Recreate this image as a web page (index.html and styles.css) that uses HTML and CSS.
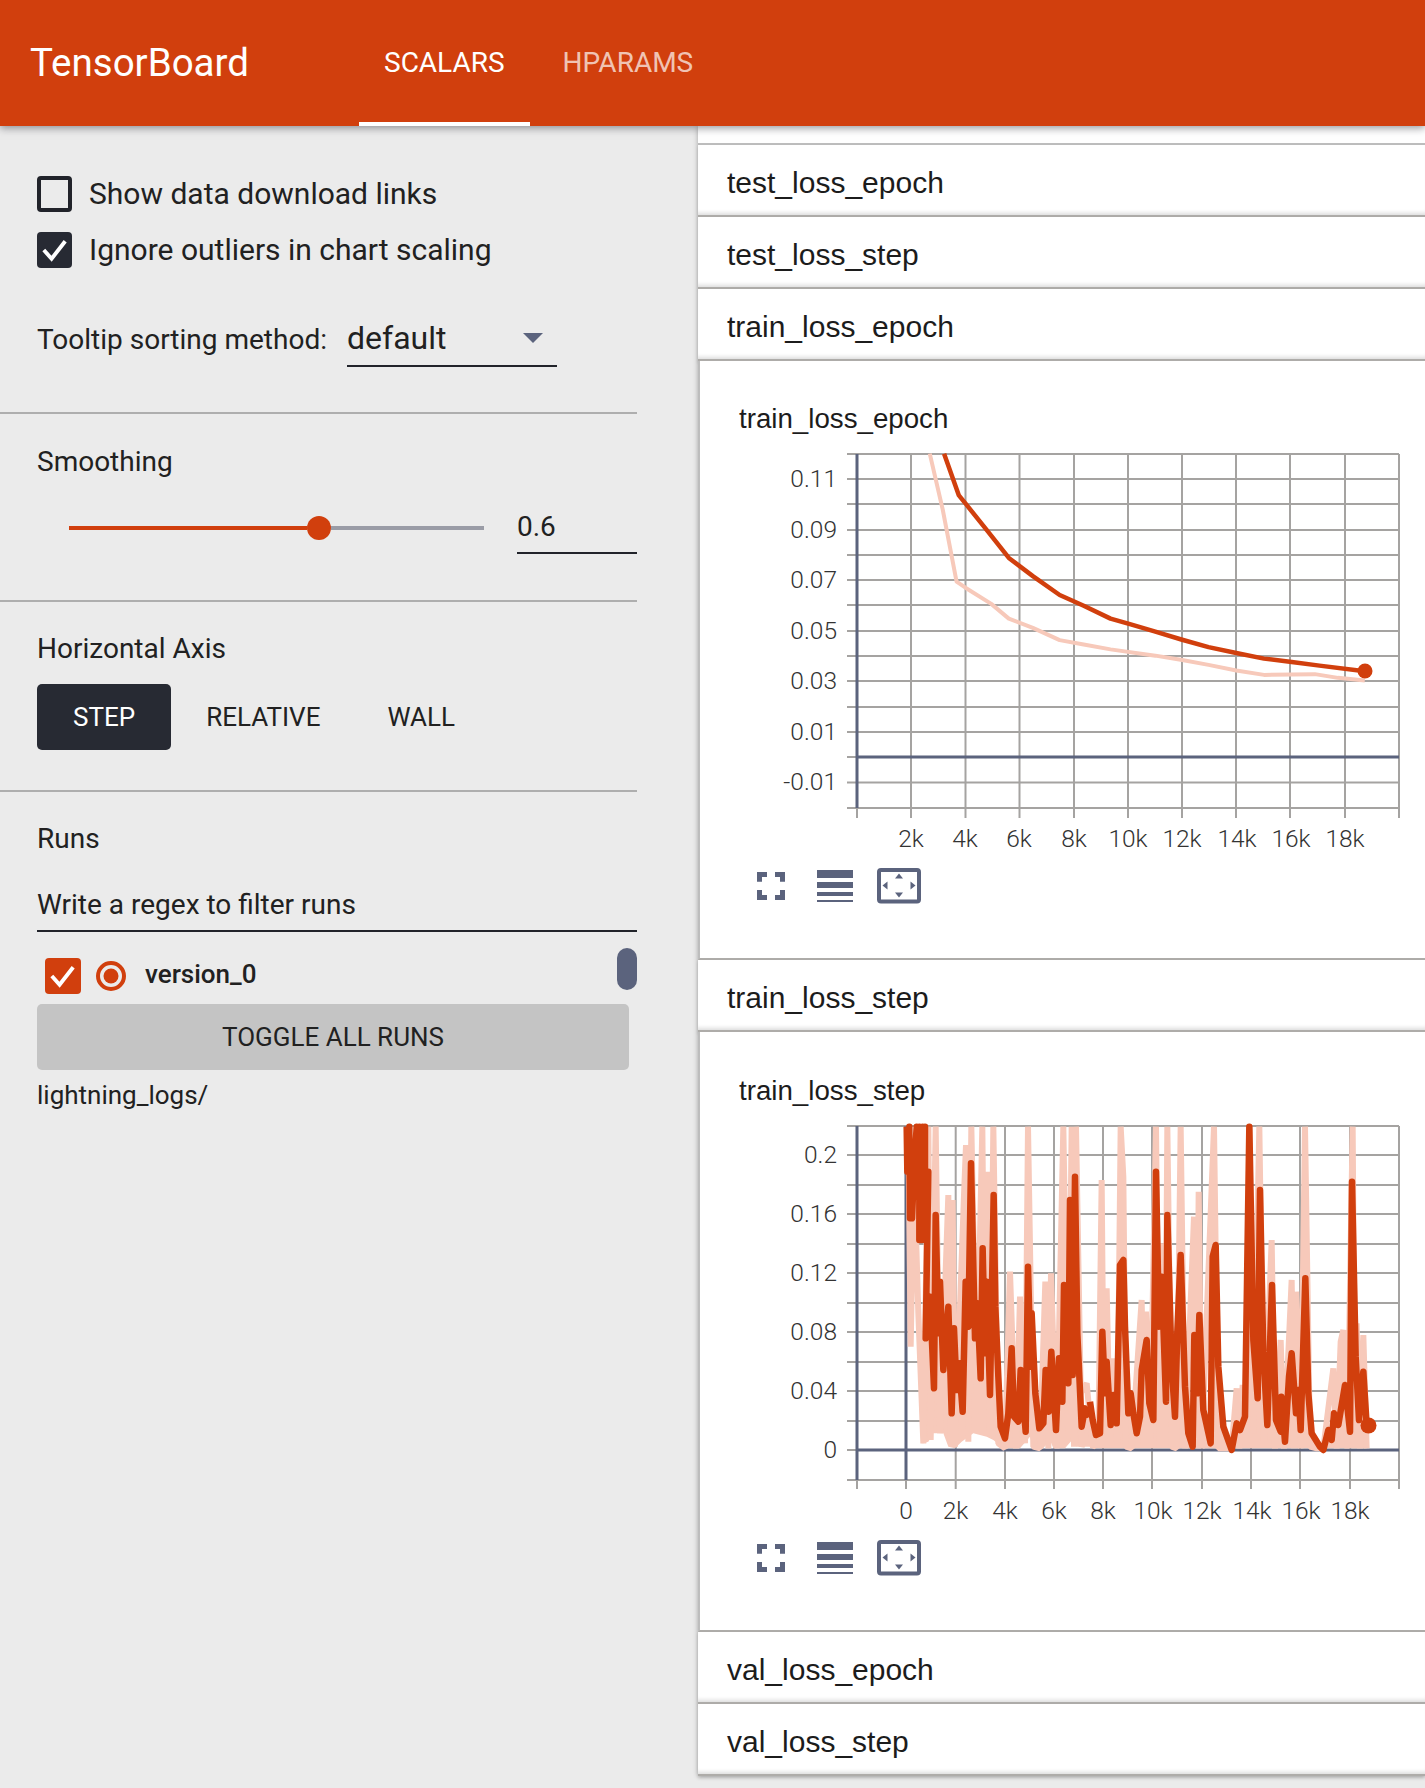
FILE: index.html
```html
<!DOCTYPE html>
<html lang="en">
<head>
<meta charset="utf-8">
<title>TensorBoard</title>
<link rel="stylesheet" href="styles.css">
</head>
<body>
<header class="topbar">
  <div class="brand">TensorBoard</div>
  <nav class="tabs">
    <a class="tab tab-active">SCALARS</a>
    <a class="tab tab-muted">HPARAMS</a>
  </nav>
</header>
<div class="layout">
  <aside class="sidebar">
    <section class="group group-options">
      <label class="check-row">
        <span class="box box-empty"></span>
        <span class="check-label">Show data download links</span>
      </label>
      <label class="check-row">
        <span class="box box-dark"><svg class="tick" viewBox="0 0 36 36"><path d="M7 18l8 9L29 9"/></svg></span>
        <span class="check-label">Ignore outliers in chart scaling</span>
      </label>
      <div class="tooltip-row">
        <span class="tooltip-label">Tooltip sorting method:</span>
        <div class="dropdown">
          <span>default</span>
          <svg class="caret" viewBox="0 0 20 10"><path d="M0 0h20L10 10z"/></svg>
        </div>
      </div>
    </section>
    <section class="group group-smoothing">
      <div class="group-title">Smoothing</div>
      <div class="smooth-row">
        <div class="slider">
          <span class="slider-fill"></span>
          <span class="slider-thumb"></span>
          <span class="slider-rest"></span>
        </div>
        <div class="smooth-value">0.6</div>
      </div>
    </section>
    <section class="group group-axis">
      <div class="group-title">Horizontal Axis</div>
      <div class="axis-buttons">
        <span class="axis-btn axis-btn-on">STEP</span>
        <span class="axis-btn axis-btn-relative">RELATIVE</span>
        <span class="axis-btn axis-btn-wall">WALL</span>
      </div>
    </section>
    <section class="group group-runs">
      <div class="group-title">Runs</div>
      <div class="filter">Write a regex to filter runs</div>
      <div class="run-list">
        <div class="run-row">
          <span class="box box-orange"><svg class="tick" viewBox="0 0 36 36"><path d="M7 18l8 9L29 9"/></svg></span>
          <svg class="radio" viewBox="0 0 30 30"><circle cx="15" cy="15" r="13" class="radio-ring"/><circle cx="15" cy="15" r="7.5" class="radio-dot"/></svg>
          <span class="run-name">version_0</span>
        </div>
        <span class="scroll-thumb"></span>
      </div>
      <div class="toggle-btn">TOGGLE ALL RUNS</div>
      <div class="run-dir">lightning_logs/</div>
    </section>
  </aside>
  <main class="content">
    <div class="stub"></div>
    <div class="pane-head">test_loss_epoch</div>
    <div class="pane-head">test_loss_step</div>
    <div class="pane-head">train_loss_epoch</div>
    <div class="chart-block">
      <div class="chart-title">train_loss_epoch</div>
      <svg class="plot" viewBox="698 440 727 420">
        <path class="grid" d="M847 454H1399M847 479H1399M847 504H1399M847 530H1399M847 555H1399M847 580H1399M847 605H1399M847 631H1399M847 656H1399M847 681H1399M847 707H1399M847 732H1399M847 757H857M847 782.500H1399M847 808H1399M911 454V818M965.500 454V818M1019.500 454V818M1074 454V818M1128 454V818M1182 454V818M1236 454V818M1290 454V818M1345 454V818M1399 454V818M857 808V818"/>
        <path class="axis" d="M857 454V808M857 757H1399"/>
        <g transform="translate(700 380) scale(.4623 .37)">
          <polyline class="raw raw-thin" points="497,199 525,350 555,545 575,562 630,605 668,645 720,670 778,703 830,715 888,728 985,745 1043,757 1100,770 1160,785 1220,797 1280,796 1330,795 1380,805 1438,812"/>
          <polyline class="smooth smooth-curve" points="528,199 560,312 575,335 620,405 668,481 720,530 778,581 830,610 888,645 930,660 985,680 1043,702 1100,722 1160,738 1220,753 1280,762 1340,772 1438,787"/>
        </g>
        <circle class="end-dot" cx="1365" cy="671" r="7.500"/>
        <g class="ylabels">
          <text x="837" y="487">0.11</text>
          <text x="837" y="538">0.09</text>
          <text x="837" y="588">0.07</text>
          <text x="837" y="639">0.05</text>
          <text x="837" y="689">0.03</text>
          <text x="837" y="740">0.01</text>
          <text x="837" y="790">-0.01</text>
        </g>
        <g class="xlabels">
          <text x="911" y="847">2k</text>
          <text x="965" y="847">4k</text>
          <text x="1019" y="847">6k</text>
          <text x="1074" y="847">8k</text>
          <text x="1128" y="847">10k</text>
          <text x="1182" y="847">12k</text>
          <text x="1237" y="847">14k</text>
          <text x="1291" y="847">16k</text>
          <text x="1345" y="847">18k</text>
        </g>
      </svg>
      <svg class="toolbar" viewBox="0 0 200 38">
        <path class="tool-stroke" d="M14.500 15.700V8.500H22M30 8.500H37.500V15.700M37.500 24V31.500H30M22 31.500H14.500V24"/>
        <path class="tool-fill" d="M72 4h36v8H72zM72 16h36v6H72zM72 26h36v4H72zM72 34h36v2H72z"/>
        <rect class="tool-box" x="134" y="4" width="40" height="31.500" rx="2"/>
        <path class="tool-fill" d="M154 7.500l4 5h-8zM154 31.500l-4-5h8zM137.500 19.500l5-4v8zM170.500 19.500l-5-4v8z"/>
      </svg>
    </div>
    <div class="pane-head">train_loss_step</div>
    <div class="chart-block chart-block-second">
      <div class="chart-title">train_loss_step</div>
      <svg class="plot" viewBox="698 1112 727 420">
        <path class="grid" d="M847 1126H1399M847 1155H1399M847 1185H1399M847 1214H1399M847 1244H1399M847 1273H1399M847 1303H1399M847 1332H1399M847 1362H1399M847 1391H1399M847 1421H1399M847 1450H857M847 1480H1399M955.700 1126V1489M1005 1126V1489M1054 1126V1489M1103 1126V1489M1152 1126V1489M1202 1126V1489M1251 1126V1489M1300 1126V1489M1350 1126V1489M1399 1126V1489M857 1480V1489M906 1480V1489"/>
        <path class="axis" d="M857 1126V1480M906 1126V1480M857 1450H1399"/>
        <g transform="translate(760 1100) scale(.33333)">
          <polygon class="raw-body" points="485,1030 497,715 510,590 522,865 527,345 535,700 540,545 550,810 565,620 575,940 582,685 590,870 597,790 608,935 617,545 625,680 633,190 645,715 652,610 662,835 668,445 675,760 680,545 690,885 701,285 706,620 715,830 722,980 735,1015 745,940 755,745 762,950 775,965 782,810 797,995 804,500 812,800 815,640 826,880 838,985 850,970 857,810 866,935 874,755 888,990 897,775 907,905 912,555 925,850 930,300 938,825 945,230 952,700 965,980 975,925 990,950 990,1040 950,1040 945,1010 915,1045 880,1045 870,1020 850,1045 820,1045 810,1010 780,1045 760,1045 730,1045 700,1020 680,1010 640,1000 605,1025 585,1045 565,1040 550,1000 520,1000 505,1025 490,1030"/>
          <polyline class="raw" points="445,80 452,740 462,200 475,640 490,1030 505,80 512,1020 527,80 540,1000 565,285 572,1030 578,300 585,1040 612,285 618,135 625,1025 634,80 650,880 667,80 675,900 682,215 690,1000 700,80 715,1030 735,1045 750,515 768,1045 780,590 795,1030 804,80 820,1040 840,1045 856,545 865,1045 873,520 890,1045 910,80 925,1000 935,80 942,1040 948,80 965,1040 980,1000"/>
        </g>
        <g transform="translate(1090 1100) scale(.33333)">
          <polygon class="raw-body" points="0,905 8,960 18,1005 30,1000 37,695 45,880 50,785 62,975 70,885 80,970 90,495 100,480 105,680 115,940 122,880 130,940 140,1000 150,950 155,810 170,720 178,910 190,960 198,215 207,680 215,530 228,905 232,345 245,800 255,950 262,695 272,465 285,860 295,1000 308,1040 313,705 322,880 328,645 340,930 362,1030 368,470 377,435 385,800 400,980 425,1050 440,970 450,990 465,950 478,80 490,720 503,895 510,270 520,760 532,975 546,555 558,960 572,995 574,890 585,1025 597,830 605,760 618,940 625,870 632,990 646,535 655,880 665,1000 690,1040 700,1050 715,990 725,1020 732,940 745,975 765,855 780,995 786,245 797,770 807,960 820,815 830,975 830,1045 0,1045"/>
          <polyline class="raw" points="-100,1000 -10,850 8,1040 25,1030 35,240 42,1040 50,565 60,1035 70,775 82,1040 92,80 100,230 108,1040 125,1045 155,600 162,1040 168,635 180,1035 198,80 208,1040 218,430 225,1040 232,80 245,1040 260,1045 272,80 285,1045 312,350 320,1045 326,275 335,1045 372,80 385,1045 425,1045 440,865 448,1045 458,855 470,1000 478,80 490,1000 508,80 522,1040 545,420 555,1045 572,720 582,1045 605,540 612,1045 618,575 632,1045 645,80 660,1040 680,1045 700,1045 730,805 740,1045 752,725 760,690 772,1045 788,80 795,1045 800,670 810,1045 820,705 830,1045"/>
        </g>
        <g transform="translate(760 1100) scale(.33333)">
          <polyline class="smooth" points="440,80 442,215 448,80 450,355 456,355 462,215 470,80 470,215 478,80 478,420 488,80 486,420 495,80 495,215 505,215 497,715 510,590 522,865 527,345 535,700 540,545 550,810 565,620 575,940 582,685 590,870 597,790 608,935 617,545 625,680 633,190 645,715 652,610 662,835 668,445 675,760 680,545 690,885 701,285 706,620 715,830 722,980 735,1015 745,940 755,745 762,950 775,965 782,810 797,995 804,500 812,800 815,640 826,880 838,985 850,970 857,810 866,935 874,755 888,990 897,775 907,905 912,555 925,850 930,300 938,825 945,230 952,700 965,980 975,925 990,950"/>
        </g>
        <g transform="translate(1090 1100) scale(.33333)">
          <polyline class="smooth" points="0,905 8,960 18,1005 30,1000 37,695 45,880 50,785 62,975 70,885 80,970 90,495 100,480 105,680 115,940 122,880 130,940 140,1000 150,950 155,810 170,720 178,910 190,960 198,215 207,680 215,530 228,905 232,345 245,800 255,950 262,695 272,465 285,860 295,1000 308,1040 313,705 322,880 328,645 340,930 362,1030 368,470 377,435 385,800 400,980 425,1050 440,970 450,990 465,950 478,80 490,720 503,895 510,270 520,760 532,975 546,555 558,960 572,995 574,890 585,1025 597,830 605,760 618,940 625,870 632,990 646,535 655,880 665,1000 690,1040 700,1050 715,990 725,1020 732,940 745,975 765,855 780,995 786,245 797,770 807,960 820,815 830,975"/>
        </g>
        <circle class="end-dot" cx="1368.500" cy="1425.500" r="8"/>
        <g class="ylabels">
          <text x="837" y="1163">0.2</text>
          <text x="837" y="1222">0.16</text>
          <text x="837" y="1281">0.12</text>
          <text x="837" y="1340">0.08</text>
          <text x="837" y="1399">0.04</text>
          <text x="837" y="1458">0</text>
        </g>
        <g class="xlabels">
          <text x="906" y="1519">0</text>
          <text x="955.500" y="1519">2k</text>
          <text x="1005" y="1519">4k</text>
          <text x="1054" y="1519">6k</text>
          <text x="1103" y="1519">8k</text>
          <text x="1153" y="1519">10k</text>
          <text x="1202" y="1519">12k</text>
          <text x="1252" y="1519">14k</text>
          <text x="1301" y="1519">16k</text>
          <text x="1350" y="1519">18k</text>
        </g>
      </svg>
      <svg class="toolbar" viewBox="0 0 200 38">
        <path class="tool-stroke" d="M14.500 15.700V8.500H22M30 8.500H37.500V15.700M37.500 24V31.500H30M22 31.500H14.500V24"/>
        <path class="tool-fill" d="M72 4h36v8H72zM72 16h36v6H72zM72 26h36v4H72zM72 34h36v2H72z"/>
        <rect class="tool-box" x="134" y="4" width="40" height="31.500" rx="2"/>
        <path class="tool-fill" d="M154 7.500l4 5h-8zM154 31.500l-4-5h8zM137.500 19.500l5-4v8zM170.500 19.500l-5-4v8z"/>
      </svg>
    </div>
    <div class="pane-head">val_loss_epoch</div>
    <div class="pane-head">val_loss_step</div>
  </main>
</div>
</body>
</html>
```

FILE: styles.css
```css
* { box-sizing: border-box; }

html, body {
  margin: 0;
  padding: 0;
}

body {
  width: 1425px;
  height: 1788px;
  overflow: hidden;
  background: #ebebeb;
  color: #212121;
  font-family: Roboto, "Liberation Sans", sans-serif;
  font-size: 28px;
}

/* Top bar */
.topbar {
  position: relative;
  z-index: 2;
  display: flex;
  height: 126px;
  padding-left: 30px;
  background: #d13f0d;
  color: #fff;
  box-shadow: 0 2px 8px rgba(60, 60, 70, .55);
}

.brand {
  width: 329px;
  font-size: 38.500px;
  line-height: 126px;
}

.tabs { display: flex; }

.tab {
  display: block;
  height: 126px;
  padding: 0 25px;
  font-size: 28px;
  line-height: 125px;
}

.tab-active { border-bottom: 4px solid #fff; }
.tab-muted { margin-left: 8px; color: rgba(255, 255, 255, .7); }

/* Layout */
.layout { display: flex; }

.sidebar {
  flex: 0 0 698px;
  width: 698px;
}

.group {
  width: 637px;
  padding-left: 37px;
  border-bottom: 2px solid #aeaeae;
}

.group-title { line-height: 38px; height: 36px; }

/* Options */
.group-options { padding-top: 50px; padding-bottom: 45px; }

.check-row {
  display: flex;
  align-items: center;
  gap: 17px;
  height: 36px;
  margin-bottom: 20px;
}

.check-label {
  margin-top: -2px;
  font-size: 30px;
}

.box {
  display: block;
  flex: 0 0 35px;
  width: 35px;
  height: 36px;
  border-radius: 4px;
}

.box-empty { border: 4px solid #21232a; }
.box-dark { background: #272a33; }
.box-orange { flex-basis: 36px; width: 36px; background: #d13f0d; }

.tick {
  display: block;
  width: 35px;
  height: 36px;
  fill: none;
  stroke: #fff;
  stroke-width: 4;
}

.tooltip-row {
  display: flex;
  align-items: flex-end;
  margin-top: 36px;
  height: 63px;
}

.tooltip-label {
  width: 310px;
  line-height: 54px;
  white-space: nowrap;
}

.dropdown {
  display: flex;
  justify-content: space-between;
  align-items: center;
  width: 210px;
  height: 63px;
  padding-top: 6px;
  padding-right: 14px;
  border-bottom: 2px solid #21232a;
  font-size: 32px;
  line-height: 50px;
}

.caret {
  width: 20px;
  height: 10px;
  fill: #5b637d;
}

/* Smoothing */
.group-smoothing { padding-top: 29px; padding-bottom: 46px; }

.smooth-row {
  display: flex;
  align-items: flex-start;
  margin-top: 25px;
  padding-left: 32px;
}

.slider {
  display: flex;
  align-items: center;
  width: 415px;
  height: 48px;
}

.slider-fill { flex: 0 0 238px; height: 4px; background: #d13f0d; }
.slider-thumb { flex: 0 0 24px; height: 24px; border-radius: 50%; background: #d13f0d; }
.slider-rest { flex: 1; height: 4px; background: #9a9ca6; }

.smooth-value {
  width: 120px;
  height: 50px;
  margin-left: 33px;
  border-bottom: 2px solid #21232a;
  line-height: 46px;
}

/* Horizontal axis */
.group-axis { padding-top: 28px; padding-bottom: 40px; }

.axis-buttons {
  display: flex;
  margin-top: 18px;
}

.axis-btn {
  height: 66px;
  padding: 0 36px;
  border-radius: 5px;
  font-size: 26px;
  line-height: 66px;
}

.axis-btn-relative { margin-left: -1px; }
.axis-btn-wall { margin-left: -5px; }

.axis-btn-on {
  background: #272a33;
  color: #fff;
}

/* Runs */
.group-runs { padding-top: 28px; border-bottom: 0; }

.filter {
  height: 46px;
  margin-top: 30px;
  border-bottom: 2px solid #21232a;
  line-height: 38px;
}

.run-list {
  position: relative;
  margin-top: 26px;
}

.run-row {
  display: flex;
  align-items: center;
  height: 36px;
  padding-left: 8px;
}

.radio {
  flex: 0 0 30px;
  width: 30px;
  height: 30px;
  margin-left: 15px;
}

.radio-ring { fill: none; stroke: #d13f0d; stroke-width: 4; }
.radio-dot { fill: #d13f0d; }

.run-name {
  margin-left: 19px;
  padding-bottom: 5px;
  font-size: 26px;
  font-weight: 500;
}

.scroll-thumb {
  position: absolute;
  top: -10px;
  right: 0;
  width: 20px;
  height: 42px;
  border-radius: 10px;
  background: #5b637d;
}

.toggle-btn {
  width: 592px;
  height: 66px;
  margin-top: 10px;
  border-radius: 5px;
  background: #c4c4c4;
  font-size: 26px;
  line-height: 66px;
  text-align: center;
}

.run-dir {
  margin-top: 7px;
  font-size: 26px;
  line-height: 36px;
}

/* Main */
.content {
  position: relative;
  flex: 1;
  min-width: 0;
  box-shadow: 0 0 5px rgba(0, 0, 0, .3);
}

.stub {
  height: 19px;
  background: #fff;
  border-bottom: 2px solid #bdbdbd;
}

.pane-head {
  height: 72px;
  padding-left: 29px;
  background: #fff;
  border-bottom: 2px solid #aeaca9;
  box-shadow: inset 0 -5px 4px -3px rgba(0, 0, 0, .14), 0 2px 3px rgba(0, 0, 0, .12);
  font-family: "Liberation Sans", Arial, sans-serif;
  font-size: 30px;
  line-height: 75px;
  color: #1c1c1c;
}

.chart-block {
  height: 599px;
  padding-top: 40px;
  background: #fff;
  border-left: 2px solid #bdbdbd;
  border-bottom: 2px solid #aeaca9;
}

.chart-block-second {
  height: 600px;
  padding-top: 41px;
}

.chart-title {
  height: 39px;
  padding-left: 39px;
  font-family: "Liberation Sans", Arial, sans-serif;
  font-size: 27.700px;
  line-height: 36px;
  color: #1c1c1c;
}

.plot {
  display: block;
  width: 727px;
  height: 420px;
  margin-left: -2px;
}

.grid { fill: none; stroke: #a5a3a1; stroke-width: 2; }
.axis { fill: none; stroke: #5b637d; stroke-width: 3; }

.raw {
  fill: none;
  stroke: #f7c9ba;
  stroke-width: 6;
  stroke-linejoin: bevel;
  vector-effect: non-scaling-stroke;
}

.raw-body { fill: #f7c9ba; }

.raw-thin { stroke-width: 4; stroke-linejoin: round; }

.smooth {
  fill: none;
  stroke: #d13f0d;
  stroke-width: 6.500;
  stroke-linejoin: round;
  vector-effect: non-scaling-stroke;
}

.smooth-curve { stroke-width: 4.500; }

.end-dot { fill: #d13f0d; }

.ylabels text,
.xlabels text {
  font-family: Roboto, "Liberation Sans", sans-serif;
  font-weight: 300;
  font-size: 24.500px;
  fill: #333;
}

.ylabels text { text-anchor: end; }
.xlabels text { text-anchor: middle; }

.toolbar {
  display: block;
  width: 200px;
  height: 38px;
  margin-top: 6px;
  margin-left: 45px;
}

.tool-stroke { fill: none; stroke: #5b637d; stroke-width: 5; }
.tool-fill { fill: #5b637d; }
.tool-box { fill: none; stroke: #5b637d; stroke-width: 4; }
```
